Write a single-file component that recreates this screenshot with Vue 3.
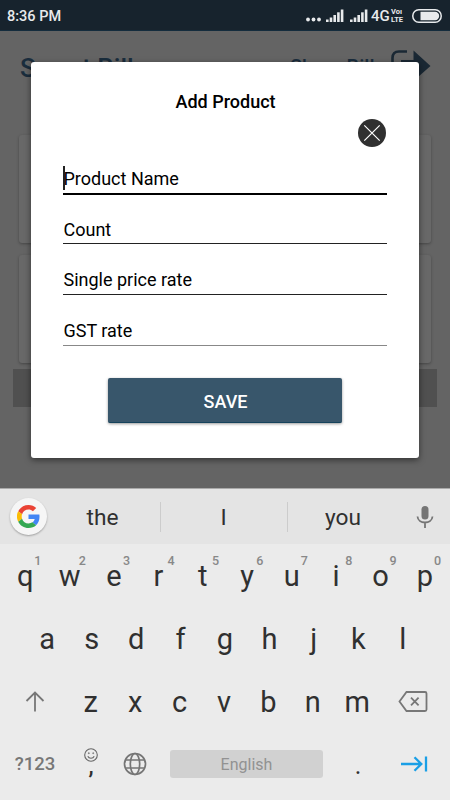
<template>
  <div class="screen">
    <header class="status">
      <span class="time">8:36 PM</span>
      <div class="indicators">
        <svg width="17" height="5" class="dots"><circle v-for="n in 3" :key="n" :cx="n * 5.5 - 3.5" cy="2.5" r="1.9" fill="#e8eaec" /></svg>
        <svg v-for="s in 2" :key="s" width="18" height="14" class="signal">
          <rect v-for="n in 5" :key="n" :x="(n - 1) * 3.7" :y="[10.5, 8.5, 6, 3.3, 0.5][n - 1]" width="2.6" :height="[2.5, 4.5, 7, 9.7, 12.5][n - 1]" fill="#e8eaec" />
        </svg>
        <span class="network">4G</span>
        <span class="volte"><span>Voı</span><span>LTE</span></span>
        <svg width="30" height="14" class="battery">
          <rect x="0.8" y="0.8" width="28.4" height="12.4" rx="6" fill="none" stroke="#e8eaec" stroke-width="1.5" />
          <path d="M8.500 2.800h14.500a4.200 4.200 0 0 1 0 8.400H8.500z" fill="#e8eaec" />
        </svg>
      </div>
    </header>

    <main class="page">
      <div class="toolbar">
        <span class="brand">Smart Bills</span>
        <span class="share">Share Bill</span>
        <svg class="share-icon" width="42" height="36" viewBox="0 0 42 36">
          <path d="M18 4.500H10q-6.500 0-6.500 6.500v17q0 5 6 5h12" fill="none" stroke="#1a2834" stroke-width="2.6" />
          <path d="M12 13h12.500V3.500L41.500 19 24.500 34v-9H12z" fill="#1a2834" />
        </svg>
      </div>
      <div class="card"></div>
      <div class="card"></div>
      <div class="strip"></div>

      <section class="dialog">
        <h1 class="title">Add Product</h1>
        <svg class="close" width="28" height="28" viewBox="0 0 28 28">
          <circle cx="14" cy="14" r="14" fill="#303030" />
          <path d="M6.300 6.300l15.400 15.400M21.700 6.300L6.300 21.700" stroke="#fff" stroke-width="1.2" />
        </svg>
        <div class="fields">
          <div v-for="(field, index) in fields" :key="field" class="field" :class="{ focused: index === 0, last: index === 3 }">
            {{ field }}
          </div>
        </div>
        <button class="save">SAVE</button>
      </section>
    </main>

    <section class="keyboard">
      <div class="suggestions">
        <div class="google">
          <svg width="23" height="23" viewBox="0 0 48 48">
            <path fill="#ea4335" d="M24 9.500c3.500 0 6.700 1.200 9.200 3.600l6.900-6.900C35.900 2.400 30.500 0 24 0 14.600 0 6.500 5.400 2.600 13.200l8 6.200C12.400 13.700 17.700 9.500 24 9.500z" />
            <path fill="#4285f4" d="M47 24.600c0-1.600-.2-3.100-.4-4.600H24v9h12.900c-.6 3-2.300 5.500-4.800 7.200l7.700 6C44.400 38 47 31.800 47 24.600z" />
            <path fill="#fbbc05" d="M10.500 28.600a14.500 14.500 0 0 1 0-9.200l-8-6.200a24 24 0 0 0 0 21.600z" />
            <path fill="#34a853" d="M24 48c6.500 0 11.900-2.100 15.900-5.800l-7.700-6c-2.200 1.500-4.900 2.300-8.200 2.300-6.300 0-11.600-4.200-13.500-9.900l-8 6.200C6.500 42.600 14.600 48 24 48z" />
          </svg>
        </div>
        <div class="words">
          <span v-for="word in words" :key="word" class="word">{{ word }}</span>
        </div>
        <svg class="mic" width="18" height="24" viewBox="0 0 18 24">
          <rect x="5.500" y="1" width="7" height="13.500" rx="3.500" fill="#757575" />
          <path d="M1.500 11.500c.5 8 14.500 8 15 0M9 17.500V23" fill="none" stroke="#757575" stroke-width="1.8" />
        </svg>
      </div>

      <div class="row top">
        <span v-for="(key, index) in 'qwertyuiop'" :key="key" class="key">{{ key }}<sup class="hint">{{ (index + 1) % 10 }}</sup></span>
      </div>
      <div class="row middle">
        <span v-for="key in 'asdfghjkl'" :key="key" class="key">{{ key }}</span>
      </div>
      <div class="row lower">
        <span class="key wide">
          <svg width="20" height="21" viewBox="0 0 20 21" fill="none" stroke="#777" stroke-width="1.8"><path d="M10 20.500V2M1.500 10L10 1.500l8.500 8.500" /></svg>
        </span>
        <span v-for="key in 'zxcvbnm'" :key="key" class="key">{{ key }}</span>
        <span class="key wide">
          <svg width="30" height="21" viewBox="0 0 30 21" fill="none" stroke="#777" stroke-width="1.8"><path d="M8.500 1H27q1.500 0 1.500 1.500v16q0 1.500-1.500 1.500H8.500L1.500 10.500zM13 6.700l7.600 7.600M20.600 6.700l-7.600 7.600" /></svg>
        </span>
      </div>
      <div class="row bottom">
        <span class="symbols">?123</span>
        <span class="emoji">
          <svg width="14" height="14" viewBox="0 0 14 14" fill="none" stroke="#666" stroke-width="1.1">
            <circle cx="7" cy="7" r="6.300" /><path d="M3.800 8.300c1.200 2.500 5.200 2.500 6.400 0" />
            <circle cx="4.800" cy="5.200" r=".6" fill="#666" stroke-width=".4" /><circle cx="9.200" cy="5.200" r=".6" fill="#666" stroke-width=".4" />
          </svg>
          <span class="comma">,</span>
        </span>
        <svg class="globe" width="24" height="24" viewBox="0 0 24 24" fill="none" stroke="#757575" stroke-width="1.7">
          <circle cx="12" cy="12" r="10.500" /><ellipse cx="12" cy="12" rx="4.700" ry="10.500" /><path d="M2.500 8h19M2.500 16h19" />
        </svg>
        <span class="space">English</span>
        <span class="period">.</span>
        <svg class="next" width="28" height="16" viewBox="0 0 28 16" fill="none" stroke="#1a9fe6" stroke-width="2.3"><path d="M1 8h20M14.500 1.200L21.300 8l-6.800 6.800M26 .5v15" /></svg>
      </div>
    </section>
  </div>
</template>

<script setup>
const fields = ['Product Name', 'Count', 'Single price rate', 'GST rate']
const words = ['the', 'I', 'you']
</script>

<style>
body {
  margin: 0;
}
</style>

<style scoped>
.screen {
  width: 450px;
  height: 800px;
  overflow: hidden;
  display: flex;
  flex-direction: column;
  font-family: Roboto, "Liberation Sans", sans-serif;
}

.status {
  flex: none;
  height: 31px;
  box-sizing: border-box;
  padding: 2px 8px 0 7px;
  display: flex;
  justify-content: space-between;
  align-items: center;
  background: #17232d;
  border-bottom: 1px solid #142c3d;
  color: #e8eaec;
}

.time {
  font-size: 14.5px;
  font-weight: 500;
}

.indicators {
  display: flex;
  align-items: center;
}

.dots {
  margin: 7px 3px 0 0;
}

.signal {
  margin-right: 6px;
}

.signal + .network {
  margin-left: -3px;
}

.network {
  width: 18px;
  font-size: 15px;
  font-weight: 500;
  margin-right: 2px;
}

.volte {
  display: flex;
  flex-direction: column;
  width: 15px;
  font-size: 7.5px;
  line-height: 8px;
  font-weight: 700;
  margin-right: 6px;
}

.page {
  position: relative;
  flex: none;
  height: 457px;
  background: #646464;
  overflow: hidden;
}

.toolbar {
  display: flex;
  height: 104px;
  color: #1a2d3d;
  font-weight: 500;
}

.brand {
  width: 270px;
  padding: 21px 0 0 20px;
  font-size: 26px;
  line-height: 32px;
}

.share {
  width: 100px;
  padding-top: 22px;
  font-size: 20px;
  line-height: 28px;
}

.share-icon {
  margin: 16px 0 0 -1px;
}

.card {
  height: 108px;
  margin: 0 19px 12px;
  border-radius: 3px;
  background: #686868;
  box-shadow: 0 1px 3px rgba(0, 0, 0, 0.3);
}

.strip {
  height: 38px;
  margin: -6px 13px 0;
  background: #505050;
}

.dialog {
  position: absolute;
  left: 31px;
  top: 31px;
  width: 388px;
  height: 396px;
  box-sizing: border-box;
  padding: 29px 32px 0;
  display: flex;
  flex-direction: column;
  background: #fff;
  border-radius: 3px;
  box-shadow: 0 2px 6px rgba(0, 0, 0, 0.5);
}

.title {
  margin: 0;
  padding-left: 1px;
  text-align: center;
  font-size: 18px;
  font-weight: 500;
  line-height: 22px;
}

.close {
  align-self: flex-end;
  margin: 6px 1px 0 0;
}

.field {
  height: 51px;
  box-sizing: border-box;
  padding: 25px 0 0 0.5px;
  border-bottom: 1px solid #222;
  font-size: 18px;
  line-height: 22px;
  position: relative;
}

.field.focused {
  height: 48px;
  padding-top: 21px;
  border-bottom: 2px solid #000;
}

.field.focused + .field {
  height: 49px;
  padding-top: 24px;
}

.field.focused::before {
  content: "";
  position: absolute;
  left: 0;
  top: 19px;
  width: 2px;
  height: 24px;
  background: #222;
}

.field.last {
  border-color: #888;
}

.save {
  align-self: center;
  width: 234px;
  height: 45px;
  margin-top: 32px;
  padding: 2px 0 0 1px;
  border: 0;
  border-bottom: 1px solid #16435c;
  border-radius: 2px;
  background: #38566b;
  box-shadow: 0 1px 3px rgba(0, 0, 0, 0.4);
  color: #fff;
  font: 500 18px Roboto, sans-serif;
}

.keyboard {
  flex: 1;
  background: #ebebeb;
  color: #303030;
}

.suggestions {
  height: 56px;
  box-sizing: border-box;
  padding-left: 10px;
  display: flex;
  align-items: center;
  background: #e4e4e4;
  border-top: 1px solid #aaa;
}

.google {
  width: 37px;
  height: 37px;
  display: grid;
  place-items: center;
  border-radius: 50%;
  background: #f6f6f6;
  box-shadow: 0 1px 2px rgba(0, 0, 0, 0.3);
}

.words {
  display: grid;
  grid-template-columns: 113px 127px 112px;
}

.word {
  height: 30px;
  text-align: center;
  font-size: 22.7px;
  line-height: 32px;
}

.word:first-child {
  padding-right: 2px;
}

.word + .word {
  padding-right: 1px;
  border-left: 1px solid #ccc;
}

.mic {
  margin-left: 17px;
}

.row {
  display: flex;
  align-items: center;
  height: 63px;
}

.key {
  position: relative;
  flex: 1;
  text-align: center;
  font-size: 29px;
  line-height: 36px;
}

.top {
  padding: 0 3px;
}

.hint {
  position: absolute;
  right: 6px;
  top: -5px;
  font-size: 12.5px;
  line-height: 16px;
  font-weight: 500;
  color: #888;
}

.middle {
  padding: 0 25px;
}

.lower {
  padding: 0 4px 0 2px;
}

.key.wide {
  flex: 1.5;
  display: flex;
  justify-content: center;
}

.bottom {
  height: 62px;
}

.symbols {
  width: 70px;
  text-align: center;
  font-size: 18.5px;
  font-weight: 500;
  color: #777;
}

.emoji {
  width: 42px;
  height: 32px;
  display: flex;
  flex-direction: column;
  align-items: center;
}

.comma {
  font-size: 23px;
  line-height: 10px;
  font-weight: 500;
}

.globe {
  margin: 0 23px 0 11px;
}

.space {
  width: 153px;
  height: 28px;
  border-radius: 3px;
  background: #d1d1d1;
  color: #929292;
  text-align: center;
  font-size: 16px;
  line-height: 29px;
}

.period {
  width: 70px;
  padding-top: 3px;
  text-align: center;
  font-size: 25px;
}

.next {
  margin-left: 7px;
}
</style>
